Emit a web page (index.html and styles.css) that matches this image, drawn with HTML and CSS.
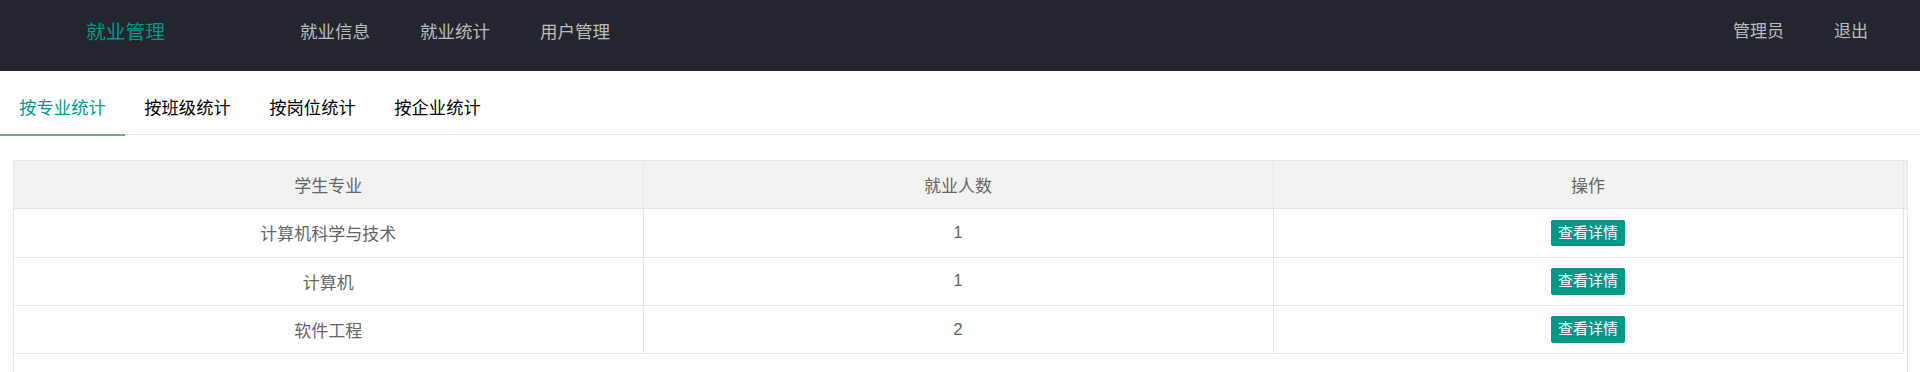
FILE: index.html
```html
<!DOCTYPE html>
<html lang="zh-CN">
<head>
<meta charset="utf-8">
<title>就业管理</title>
<link rel="stylesheet" href="styles.css">
</head>
<body>
<div class="header">
  <div class="logo">就业管理</div>
  <ul class="nav">
    <li class="nav-item">就业信息</li>
    <li class="nav-item">就业统计</li>
    <li class="nav-item">用户管理</li>
  </ul>
  <ul class="nav nav-right">
    <li class="nav-item">管理员</li>
    <li class="nav-item">退出</li>
  </ul>
</div>
<div class="tabs">
  <ul class="tab-title">
    <li class="tab active">按专业统计</li>
    <li class="tab">按班级统计</li>
    <li class="tab">按岗位统计</li>
    <li class="tab">按企业统计</li>
  </ul>
</div>
<div class="table-view">
  <div class="table-head">
    <table class="grid">
      <colgroup><col class="c1"><col class="c2"><col class="c3"></colgroup>
      <tr><th>学生专业</th><th>就业人数</th><th>操作</th></tr>
    </table>
  </div>
  <table class="grid body">
    <colgroup><col class="c1"><col class="c2"><col class="c3"></colgroup>
    <tr><td>计算机科学与技术</td><td class="num">1</td><td><span class="btn">查看详情</span></td></tr>
    <tr><td>计算机</td><td class="num">1</td><td><span class="btn">查看详情</span></td></tr>
    <tr><td>软件工程</td><td class="num">2</td><td><span class="btn">查看详情</span></td></tr>
  </table>
</div>
</body>
</html>
```
FILE: styles.css
```css
* { box-sizing: border-box; }
html, body { margin: 0; padding: 0; background: #fff; }
body {
  font-family: "Liberation Sans", "Noto Sans CJK SC", sans-serif;
  color: #666;
  overflow: hidden;
}
ul { list-style: none; margin: 0; padding: 0; }

.header {
  height: 71px;
  background: #23262e;
  display: flex;
  align-items: flex-start;
}
.logo {
  width: 251px;
  height: 65px;
  line-height: 65px;
  text-align: center;
  color: #009688;
  font-size: 19.8px;
}
.nav {
  display: flex;
  margin-left: 24px;
}
.nav-item {
  padding: 0 25px;
  height: 64px;
  line-height: 64px;
  font-size: 17.5px;
  color: rgba(255, 255, 255, 0.7);
}
.nav-right {
  margin-left: auto;
  padding-right: 27px;
}
.nav-right .nav-item { font-size: 17px; }

.tabs { padding-top: 12px; }
.tab-title {
  display: flex;
  height: 52px;
  border-bottom: 1px solid #e6e6e6;
}
.tab {
  position: relative;
  width: 125px;
  height: 51px;
  line-height: 50px;
  text-align: center;
  font-size: 17.3px;
  color: #000;
}
.tab.active { color: #009688; }
.tab.active::after {
  content: "";
  position: absolute;
  left: 0;
  right: 0;
  bottom: -2px;
  height: 2px;
  background: #5fb878;
}

.table-view {
  margin: 25px 12px 0 13px;
  border: 1px solid #e6e6e6;
  height: 230px;
}
.table-head {
  background: #f2f2f2;
  border-bottom: 1px solid #e6e6e6;
}
.grid {
  width: 1889px;
  border-collapse: collapse;
  table-layout: fixed;
}
.c1 { width: 629px; }
.c2 { width: 630px; }
.c3 { width: 630px; }
.grid th, .grid td {
  border-right: 1px solid #e6e6e6;
  text-align: center;
  font-size: 17px;
  font-weight: normal;
  color: #666;
  padding: 0;
}
.grid th {
  height: 47px;
  background: #f2f2f2;
}
.body td {
  height: 48.3px;
  border-bottom: 1px solid #e6e6e6;
}
.num { font-size: 17px; }
.btn {
  display: inline-block;
  height: 26.5px;
  line-height: 26.5px;
  padding: 0 6.5px;
  background: #009688;
  color: #fff;
  font-size: 15px;
  border-radius: 2px;
  vertical-align: middle;
}
```
